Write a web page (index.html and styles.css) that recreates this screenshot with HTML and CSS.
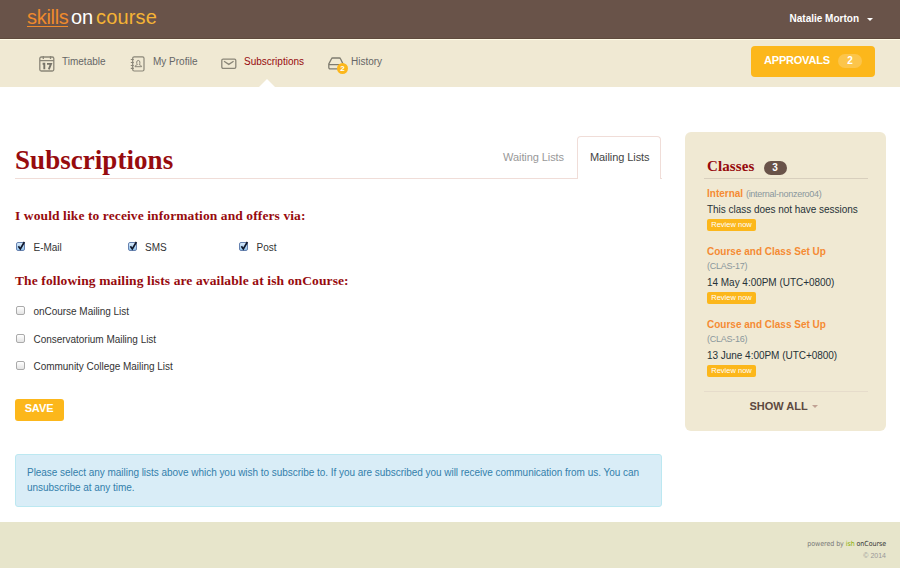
FILE: index.html
```html
<!DOCTYPE html>
<html lang="en">
<head>
<meta charset="utf-8">
<title>Subscriptions</title>
<link rel="stylesheet" href="styles.css">
</head>
<body>
<header class="topbar">
  <div class="logo"><span class="logo-skills">skills</span><span class="logo-on">on</span><span class="logo-course">course</span></div>
  <div class="user"><span class="user-name">Natalie Morton</span><span class="caret"></span></div>
</header>
<nav class="nav">
  <a class="nav-item timetable">
    <svg width="16" height="16" viewBox="0 0 16 16" fill="none" stroke="#8a8678" stroke-width="1.3"><rect x=".8" y="1" width="14" height="14" rx="1.5"/><path d="M1 4.6h14M4.3 0v3M11.5 0v3"/><path d="M3.6 7.800h1.700v5.500M8 7.900h4L9.800 13.300" stroke="#77746a" stroke-width="1.9"/></svg>
    <span>Timetable</span></a>
  <a class="nav-item profile">
    <svg width="16" height="16" viewBox="0 0 16 16" fill="none" stroke="#8a8678" stroke-width="1.2"><rect x="2.7" y=".8" width="11.300" height="14.200" rx="1.500"/><path d="M.8 3.500h3M.8 6.500h3M.8 9.500h3M.8 12.300h3"/><path d="M5 10.700c0-1.500 1.300-1.400 2.300-2-.9-1.300-1-4.300 1-4.300s1.900 3 1 4.300c1 .6 2.300.5 2.300 2z" stroke-width="1"/></svg>
    <span>My Profile</span></a>
  <a class="nav-item subs active">
    <svg width="16" height="12" viewBox="0 0 16 12" fill="none" stroke="#8a8678" stroke-width="1.300"><rect x=".8" y="1.100" width="14" height="9.300" rx="1.300"/><path d="M3 3.200l4.800 3.200 4.800-3.200"/></svg>
    <span>Subscriptions</span></a>
  <a class="nav-item history">
    <span class="tray"><svg width="16" height="13" viewBox="0 0 16 13" fill="none" stroke="#7f7c70" stroke-width="1.300"><path d="M4.600 1h6.800q.8 0 1.100.8L15 7v3.500a1.300 1.300 0 0 1-1.300 1.300H2.100A1.300 1.300 0 0 1 .8 10.500V7l2.700-5.200Q3.800 1 4.600 1zM1 7.600h14"/></svg><b class="dot">2</b></span>
    <span>History</span></a>
  <a class="approvals"><span class="approvals-label">APPROVALS</span><b class="approvals-count">2</b></a>
</nav>
<main class="page">
  <section class="content">
    <div class="heading">
      <h1>Subscriptions</h1>
      <div class="tab">Waiting Lists</div>
      <div class="tab current">Mailing Lists</div>
      <div class="heading-end"></div>
    </div>
    <h2 class="receive">I would like to receive information and offers via:</h2>
    <div class="channels">
      <label class="option"><i class="box checked"><svg width="12" height="12" viewBox="0 0 12 12"><path d="M3.400 5.300l1.900 2.600L9.400 1" fill="none" stroke="#10182c" stroke-width="1.700"/></svg></i><span>E-Mail</span></label>
      <label class="option"><i class="box checked"><svg width="12" height="12" viewBox="0 0 12 12"><path d="M3.400 5.300l1.900 2.600L9.400 1" fill="none" stroke="#10182c" stroke-width="1.700"/></svg></i><span>SMS</span></label>
      <label class="option"><i class="box checked"><svg width="12" height="12" viewBox="0 0 12 12"><path d="M3.400 5.300l1.900 2.600L9.400 1" fill="none" stroke="#10182c" stroke-width="1.700"/></svg></i><span>Post</span></label>
    </div>
    <h2 class="available">The following mailing lists are available at ish onCourse:</h2>
    <div class="lists">
      <label class="option"><i class="box"></i><span>onCourse Mailing List</span></label>
      <label class="option"><i class="box"></i><span>Conservatorium Mailing List</span></label>
      <label class="option"><i class="box"></i><span>Community College Mailing List</span></label>
    </div>
    <button class="save">SAVE</button>
    <p class="notice">Please select any mailing lists above which you wish to subscribe to. If you are subscribed you will receive communication from us. You can<br>unsubscribe at any time.</p>
  </section>
  <aside class="sidebar">
    <div class="side-title"><h3>Classes</h3><b class="count">3</b></div>
    <article class="class-item first"><p class="name"><b>Internal</b> <span class="code">(internal-nonzero04)</span></p><p class="when">This class does not have sessions</p><a class="review">Review now</a></article>
    <article class="class-item"><p class="name"><b>Course and Class Set Up</b></p><p class="code">(CLAS-17)</p><p class="when">14 May 4:00PM (UTC+0800)</p><a class="review">Review now</a></article>
    <article class="class-item"><p class="name"><b>Course and Class Set Up</b></p><p class="code">(CLAS-16)</p><p class="when">13 June 4:00PM (UTC+0800)</p><a class="review">Review now</a></article>
    <div class="show-all"><span>SHOW ALL</span><i class="caret"></i></div>
  </aside>
</main>
<footer class="footer">
  <p class="powered">powered by <span class="ish">ish</span> <span class="brand">onCourse</span></p>
  <p class="copyright">© 2014</p>
</footer>
</body>
</html>
```
FILE: styles.css
```css
* { box-sizing: border-box; }
body, h1, h2, h3, p { margin: 0; }
body { background: #fff; color: #333; font: 10px/14px "Liberation Sans", Arial, sans-serif; white-space: nowrap; }

.topbar { height: 40px; padding: 0 27px; display: flex; justify-content: space-between; background: #695349; border-bottom: 1px solid #fffae6; box-shadow: inset 0 -1px #5f4a3d; }
.logo { display: flex; align-items: flex-start; padding-top: 7px; font-size: 20px; line-height: 20px; letter-spacing: -.1px; }
.logo-skills { width: 41px; height: 20px; color: #ef8a2c; border-bottom: 1px solid #ef8a2c; letter-spacing: -.3px; }
.logo-on { color: #fff; margin-left: 3px; }
.logo-course { color: #f5b335; margin-left: 3px; letter-spacing: .15px; }
.user { display: flex; align-items: center; height: 37px; gap: 8px; color: #fff; font-weight: bold; }
.caret { width: 0; height: 0; border: 3px solid transparent; border-top: 3px solid currentColor; border-bottom: 0; }
.user .caret { margin-top: 1px; }

.nav { display: flex; height: 47px; padding: 6px 25px 0 39px; background: #f0e9d3; color: #666; }
.nav-item { display: flex; align-items: flex-start; height: 41px; position: relative; line-height: 32px; }
.nav-item svg { display: block; margin-top: 10px; margin-right: 7px; }
.timetable { width: 91px; }
.profile { width: 91px; }
.subs { width: 107px; }
.subs svg { margin-top: 12px; }
.history svg { margin-top: 11px; }
.active { color: #970b0e; }
.active::after { content: ""; position: absolute; left: 38px; bottom: 0; border: 8px solid transparent; border-bottom-color: #fff; border-top: 0; }
.tray { position: relative; }
.dot { position: absolute; left: 9px; top: 17px; width: 11px; height: 11px; border-radius: 50%; background: #fcb71c; color: #fff; font-size: 8px; line-height: 11px; text-align: center; }
.approvals { display: flex; align-items: center; width: 124px; height: 31px; margin-left: auto; padding: 0 13px 2px; gap: 9px; border-radius: 4px; background: #fcb71b; color: #fff; font-size: 11px; font-weight: bold; }
.approvals-label { width: 65px; margin-top: -1px; letter-spacing: -.2px; }
.approvals-count { width: 24px; height: 14px; margin-top: 1px; border-radius: 7px; background: #fcc54b; font-size: 10px; line-height: 13px; text-align: center; }

.page { display: flex; gap: 23px; height: 435px; padding: 45px 14px 0 15px; }
.content { width: 647px; }
.heading { display: flex; height: 43px; margin-top: 4px; }
.heading h1 { flex: 1; border-bottom: 1px solid #f0ddd8; }
h1, h2, h3 { color: #970b0e; font-family: "Liberation Serif", serif; font-weight: bold; }
h1 { font-size: 27px; line-height: 48px; letter-spacing: .05px; }
.tab { font-size: 11px; line-height: 42px; color: #999; padding-right: 13px; border-bottom: 1px solid #f0ddd8; letter-spacing: -.08px; }
.current { width: 84px; padding: 0 0 0 12px; color: #444; border: 1px solid #f0ddd8; border-bottom: 0; border-radius: 4px 4px 0 0; line-height: 40px; }
.heading-end { width: 1px; border-bottom: 1px solid #f0ddd8; }
h2 { font-size: 13.500px; line-height: 18px; }
.receive { margin-top: 28px; letter-spacing: .1px; }
.channels { display: flex; height: 14px; margin-top: 16px; }
.channels .option { width: 111.500px; }
.option { display: flex; align-items: center; height: 14px; letter-spacing: -.03px; }
.box { width: 9px; height: 9px; margin: -3px 8.500px 0 1px; border: 1px solid #aaa; border-radius: 2px; background: linear-gradient(#fff, #e4e4e4); }
.checked { border-color: #6682b0; background: linear-gradient(#d8eafa, #94c5ee); }
.box svg { display: block; margin: -2px 0 0 -2px; }
.available { margin-top: 17px; letter-spacing: .12px; }
.lists { display: flex; flex-direction: column; gap: 13.500px; margin-top: 15px; }
.save { display: block; width: 49px; height: 22px; margin-top: 25px; padding: 0 1px 3px 0; border: 0; border-radius: 3px; background: #fcb71b; color: #fff; font: bold 11px/19px "Liberation Sans", Arial, sans-serif; letter-spacing: -.1px; }
.notice { height: 53px; margin-top: 33px; padding: 10px 11px; border: 1px solid #bce8f1; border-radius: 3px; background: #d9edf7; color: #3380ab; line-height: 15px; letter-spacing: -.036px; }

.sidebar { width: 201px; height: 299px; padding: 23px 18px 0 19px; border-radius: 6px; background: #f0e9d3; }
.side-title { display: flex; align-items: center; gap: 9px; height: 24px; padding-left: 3px; border-bottom: 1px solid #d8cfbd; }
h3 { font-size: 15px; line-height: 20px; margin-top: -2px; letter-spacing: .12px; }
.count { width: 23px; height: 14px; margin-top: 3px; border-radius: 7px; background: #695349; color: #fff; line-height: 14px; text-align: center; }
.class-item { padding: 7px 0 0 3px; height: 73px; }
.first { height: 58px; }
.class-item p { line-height: 15px; }
.class-item .when { line-height: 17px; color: #263238; letter-spacing: -.03px; }
.first .when { line-height: 16px; }
.name b { color: #f58b33; }
.code { color: #8a979c; font-size: 9px; letter-spacing: -.25px; }
.name .code { letter-spacing: -.27px; }
.review { display: block; width: 49px; height: 12px; margin-top: 1px; border-radius: 2px; background: #fcb71b; color: #fff; font-size: 7.500px; line-height: 11px; text-align: center; }
.show-all { display: flex; align-items: center; justify-content: center; gap: 4px; height: 28px; margin-top: 8px; padding-right: 5px; border-top: 1px solid #e6dccb; color: #5d4940; font-size: 11px; font-weight: bold; }
.show-all .caret { margin-top: 2px; color: #c0a294; }

.footer { height: 46px; padding: 16px 14px 0; background: #e7e5cb; text-align: right; }
.powered { color: #777; font: 7px/12px "DejaVu Sans Condensed", "DejaVu Sans", sans-serif; letter-spacing: -.05px; }
.ish { color: #86ad00; }
.brand { color: #333; }
.copyright { color: #999; font-size: 7px; line-height: 11px; }
```
